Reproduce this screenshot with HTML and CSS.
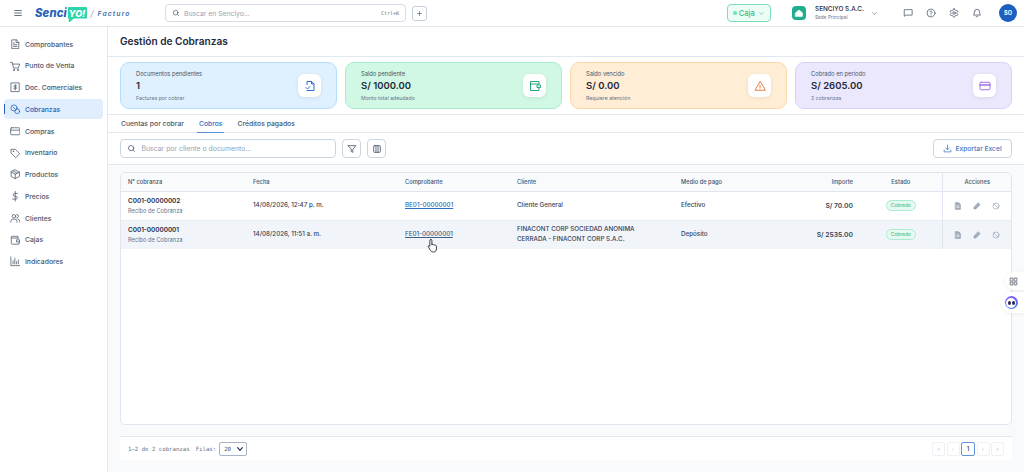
FILE: index.html
```html
<!DOCTYPE html>
<html lang="en">
<head>
    <meta charset="UTF-8">
    <meta name="viewport" content="width=device-width, initial-scale=1.0">
    <title>Gestión de Cobranzas</title>
    <link rel="stylesheet" href="styles.css">
</head>
<body>

    <!-- Top bar -->
    <header class="topbar">
        <div class="topbar-left">
            <svg class="burger" viewBox="0 0 24 24"><path d="M4 6h16M4 12h16M4 18h16"/></svg>
            <div class="logo">
                <span class="logo-senci">Senci</span>
                <span class="logo-yo">YO!</span>
                <span class="logo-slash">/</span>
                <span class="logo-facturo">Facturo</span>
            </div>
        </div>
        <div class="global-search">
            <svg class="ico ico-search" viewBox="0 0 24 24"><circle cx="11" cy="11" r="7"/><path d="m20 20-4-4"/></svg>
            <span class="global-placeholder">Buscar en Senciyo...</span>
            <span class="kbd">Ctrl+K</span>
        </div>
        <button class="plus-btn"><svg viewBox="0 0 24 24"><path d="M12 5v14M5 12h14"/></svg></button>
        <div class="topbar-right">
            <button class="caja-btn"><span class="caja-dot"></span>Caja<svg viewBox="0 0 24 24"><path d="m6 9 6 6 6-6"/></svg></button>
            <div class="company">
                <span class="company-icon"><svg viewBox="0 0 24 24"><path d="M4 11.500 12 5l8 6.500V20H4z"/></svg></span>
                <div class="company-text">
                    <div class="company-name">SENCIYO S.A.C.</div>
                    <div class="company-sede">Sede Principal</div>
                </div>
                <svg class="company-caret" viewBox="0 0 24 24"><path d="m6 9 6 6 6-6"/></svg>
            </div>
            <div class="top-icons">
                <svg viewBox="0 0 24 24"><path d="M21 4H3v16l4-3h14z"/></svg>
                <svg viewBox="0 0 24 24"><circle cx="12" cy="12" r="9.500"/><path d="M9.500 9.500a2.500 2.500 0 1 1 3.800 2.100c-.9.600-1.300 1.100-1.300 2.200M12 17h.01"/></svg>
                <svg viewBox="0 0 24 24"><path d="M12.220 2h-.44a2 2 0 0 0-2 2v.18a2 2 0 0 1-1 1.730l-.43.25a2 2 0 0 1-2 0l-.15-.08a2 2 0 0 0-2.730.73l-.22.38a2 2 0 0 0 .73 2.730l.15.1a2 2 0 0 1 1 1.720v.51a2 2 0 0 1-1 1.740l-.15.09a2 2 0 0 0-.73 2.730l.22.38a2 2 0 0 0 2.730.73l.15-.08a2 2 0 0 1 2 0l.43.25a2 2 0 0 1 1 1.730V20a2 2 0 0 0 2 2h.44a2 2 0 0 0 2-2v-.18a2 2 0 0 1 1-1.730l.43-.25a2 2 0 0 1 2 0l.15.08a2 2 0 0 0 2.730-.73l.22-.39a2 2 0 0 0-.73-2.730l-.15-.08a2 2 0 0 1-1-1.740v-.5a2 2 0 0 1 1-1.740l.15-.09a2 2 0 0 0 .73-2.730l-.22-.38a2 2 0 0 0-2.730-.73l-.15.08a2 2 0 0 1-2 0l-.43-.25a2 2 0 0 1-1-1.730V4a2 2 0 0 0-2-2z"/><circle cx="12" cy="12" r="3"/></svg>
                <svg viewBox="0 0 24 24"><path d="M6 9a6 6 0 0 1 12 0c0 6 2.500 8 2.500 8h-17S6 15 6 9M10 20.500a2.200 2.200 0 0 0 4 0"/></svg>
            </div>
            <div class="avatar">SO</div>
        </div>
    </header>

    <div class="layout">
        <!-- Sidebar -->
        <nav class="sidebar">
            <a class="nav-item"><svg viewBox="0 0 24 24"><path d="M14 2H4v20h16V8zM14 2v6h6M8 13h8M8 17h8M8 9h2"/></svg>Comprobantes</a>
            <a class="nav-item"><svg viewBox="0 0 24 24"><path d="M1 3h4l3 13h11l3-9H6"/><circle cx="9" cy="20.500" r="1.300"/><circle cx="18" cy="20.500" r="1.300"/></svg>Punto de Venta</a>
            <a class="nav-item"><svg viewBox="0 0 24 24"><path d="M3 2h18v20H3zM12 6v12M15 8.500h-4a1.700 1.700 0 0 0 0 3.500h2a1.700 1.700 0 0 1 0 3.500H9"/></svg>Doc. Comerciales</a>
            <a class="nav-item active"><svg viewBox="0 0 24 24"><circle cx="9" cy="9" r="7"/><circle cx="16.500" cy="16.500" r="5.500"/><path d="M6.500 6.500l5 5"/></svg>Cobranzas</a>
            <a class="nav-item"><svg viewBox="0 0 24 24"><rect x="1.500" y="4" width="21" height="16" rx="2"/><path d="M1.500 9.500h21"/></svg>Compras</a>
            <a class="nav-item"><svg viewBox="0 0 24 24"><path d="M3 3h9l10 10-9 9L3 12z"/><circle cx="7.500" cy="7.500" r=".8"/></svg>Inventario</a>
            <a class="nav-item"><svg viewBox="0 0 24 24"><path d="M12 2 21.500 7v10L12 22l-9.500-5V7zM2.500 7l9.500 5 9.500-5M12 12v10M7 4.500l9.500 5"/></svg>Productos</a>
            <a class="nav-item"><svg viewBox="0 0 24 24"><path d="M12 1v22M17 5.500H10a3.300 3.300 0 0 0 0 6.500h4a3.300 3.300 0 0 1 0 6.500H6"/></svg>Precios</a>
            <a class="nav-item"><svg viewBox="0 0 24 24"><circle cx="9" cy="7.500" r="4"/><path d="M2 21v-2a5 5 0 0 1 5-5h4a5 5 0 0 1 5 5v2M15.500 3.500a4 4 0 0 1 0 8M18.500 14a5 5 0 0 1 4 5v2"/></svg>Clientes</a>
            <a class="nav-item"><svg viewBox="0 0 24 24"><path d="M19 7H5a2 2 0 0 1 0-4h13v4M3 5v14a2 2 0 0 0 2 2h15a1 1 0 0 0 1-1v-4M21 11h-6v5h6z"/></svg>Cajas</a>
            <a class="nav-item"><svg viewBox="0 0 24 24"><path d="M2 2v20h20M7 18v-7M11 18V5M15 18v-5M19 18v-9"/></svg>Indicadores</a>
        </nav>

        <main class="content">
            <h1 class="page-title">Gestión de Cobranzas</h1>

            <!-- KPI cards -->
            <section class="kpis">
                <div class="kpi kpi-blue">
                    <div>
                        <div class="kpi-label">Documentos pendientes</div>
                        <div class="kpi-value">1</div>
                        <div class="kpi-sub">Facturas por cobrar</div>
                    </div>
                    <span class="kpi-icon"><svg viewBox="0 0 24 24"><path d="M6 9V3h9l5 5v13H6M15 3v5h5M4 15l3 3 5-5"/></svg></span>
                </div>
                <div class="kpi kpi-green">
                    <div>
                        <div class="kpi-label">Saldo pendiente</div>
                        <div class="kpi-value">S/ 1000.00</div>
                        <div class="kpi-sub">Monto total adeudado</div>
                    </div>
                    <span class="kpi-icon"><svg viewBox="0 0 24 24"><path d="M20 8V3H3v18h17v-5M3 8h17M22 10h-6v5h6z"/></svg></span>
                </div>
                <div class="kpi kpi-orange">
                    <div>
                        <div class="kpi-label">Saldo vencido</div>
                        <div class="kpi-value">S/ 0.00</div>
                        <div class="kpi-sub">Requiere atención</div>
                    </div>
                    <span class="kpi-icon"><svg viewBox="0 0 24 24"><path d="M12 3 2 20.500h20zM12 10v5M12 18h.01"/></svg></span>
                </div>
                <div class="kpi kpi-purple">
                    <div>
                        <div class="kpi-label">Cobrado en período</div>
                        <div class="kpi-value">S/ 2605.00</div>
                        <div class="kpi-sub">2 cobranzas</div>
                    </div>
                    <span class="kpi-icon"><svg viewBox="0 0 24 24"><rect x="2" y="4.500" width="20" height="15" rx="2"/><path d="M2 10h20" stroke-width="3"/></svg></span>
                </div>
            </section>

            <!-- Tabs -->
            <div class="tabs">
                <a class="tab">Cuentas por cobrar</a>
                <a class="tab active">Cobros</a>
                <a class="tab">Créditos pagados</a>
            </div>

            <!-- Toolbar -->
            <div class="toolbar">
                <div class="table-search">
                    <svg viewBox="0 0 24 24"><circle cx="11" cy="11" r="7"/><path d="m20 20-4-4"/></svg>
                    <span>Buscar por cliente o documento...</span>
                </div>
                <button class="tool-btn"><svg viewBox="0 0 24 24"><path d="M3 4h18l-7 8.500V20l-4-2v-5.500z"/></svg></button>
                <button class="tool-btn"><svg viewBox="0 0 24 24"><rect x="4" y="4" width="16" height="16" rx="2"/><path d="M9.500 4v16M14.500 4v16"/></svg></button>
                <button class="export-btn"><svg viewBox="0 0 24 24"><path d="M12 3v12M7 10.500l5 5 5-5M3 16v5h18v-5"/></svg>Exportar Excel</button>
            </div>

            <!-- Table -->
            <section class="table-area">
                <div class="table-card">
                    <table class="cob-table">
                        <colgroup>
                            <col class="col-num"><col class="col-fecha"><col class="col-comp"><col class="col-cliente"><col class="col-medio"><col class="col-importe"><col class="col-estado"><col class="col-acc">
                        </colgroup>
                        <thead>
                            <tr>
                                <th>N° cobranza</th>
                                <th>Fecha</th>
                                <th>Comprobante</th>
                                <th>Cliente</th>
                                <th>Medio de pago</th>
                                <th class="right">Importe</th>
                                <th class="center">Estado</th>
                                <th class="center acc">Acciones</th>
                            </tr>
                        </thead>
                        <tbody>
                            <tr>
                                <td><div class="num">C001-00000002</div><div class="num-sub">Recibo de Cobranza</div></td>
                                <td class="strong">14/08/2026, 12:47 p. m.</td>
                                <td><a class="doc-link">BE01-00000001</a></td>
                                <td class="strong">Cliente General</td>
                                <td class="strong">Efectivo</td>
                                <td class="right amount">S/ 70.00</td>
                                <td class="center"><span class="pill">Cobrado</span></td>
                                <td class="acc">
                                    <div class="acc-icons">
                                        <svg viewBox="0 0 24 24"><path class="solid" d="M5 2h9l5 5v15H5z"/><path d="M9 12h6M9 16h6" class="cut"/></svg>
                                        <svg viewBox="0 0 24 24"><path class="solid" d="M16 3l5 5L8 21H3v-5z"/></svg>
                                        <svg viewBox="0 0 24 24"><circle cx="12" cy="12" r="9"/><path d="m5.500 5.500 13 13"/></svg>
                                    </div>
                                </td>
                            </tr>
                            <tr class="hover">
                                <td><div class="num">C001-00000001</div><div class="num-sub">Recibo de Cobranza</div></td>
                                <td class="strong">14/08/2026, 11:51 a. m.</td>
                                <td><a class="doc-link dark">FE01-00000001</a></td>
                                <td class="strong">FINACONT CORP SOCIEDAD ANONIMA<br>CERRADA - FINACONT CORP S.A.C.</td>
                                <td class="strong">Depósito</td>
                                <td class="right amount">S/ 2535.00</td>
                                <td class="center"><span class="pill">Cobrado</span></td>
                                <td class="acc">
                                    <div class="acc-icons">
                                        <svg viewBox="0 0 24 24"><path class="solid" d="M5 2h9l5 5v15H5z"/><path d="M9 12h6M9 16h6" class="cut"/></svg>
                                        <svg viewBox="0 0 24 24"><path class="solid" d="M16 3l5 5L8 21H3v-5z"/></svg>
                                        <svg viewBox="0 0 24 24"><circle cx="12" cy="12" r="9"/><path d="m5.500 5.500 13 13"/></svg>
                                    </div>
                                </td>
                            </tr>
                        </tbody>
                    </table>
                </div>

                <div class="pager">
                    <span class="pager-info">1–2 de 2 cobranzas</span>
                    <span class="pager-info rows">Filas:</span>
                    <span class="rows-select">20<svg viewBox="0 0 24 24"><path d="m5 8 7 8 7-8"/></svg></span>
                    <div class="pages">
                        <span class="page">«</span>
                        <span class="page">‹</span>
                        <span class="page current">1</span>
                        <span class="page">›</span>
                        <span class="page">»</span>
                    </div>
                </div>
            </section>
        </main>
    </div>

    <!-- Mouse pointer over the second row -->
    <svg class="hand-cursor" viewBox="0 0 14 18"><path d="M4.500 1.500c.8 0 1.200.5 1.200 1.300v5l.3-.9c1 0 1.300.2 1.500.8.900-.4 1.500-.2 1.700.6.900-.3 1.700 0 1.800 1v3.200c0 2-1.200 3.500-3.300 3.500H6.800c-1.300 0-2-.6-2.700-1.700L1.500 9.900c-.5-1 .6-1.700 1.400-1l.4.500V2.800c0-.8.400-1.300 1.200-1.300z"/></svg>

    <!-- Floating widgets on the right edge -->
    <div class="float-btn float-grid">
        <svg viewBox="0 0 24 24"><rect x="3" y="3" width="7.500" height="7.500" rx="1.500"/><rect x="13.500" y="3" width="7.500" height="7.500" rx="1.500"/><rect x="3" y="13.500" width="7.500" height="7.500" rx="1.500"/><rect x="13.500" y="13.500" width="7.500" height="7.500" rx="1.500"/></svg>
    </div>
    <div class="float-btn float-bot"><span class="bot-ring"><span class="bot-face"><i></i><i></i></span></span></div>

</body>
</html>
```

FILE: styles.css
```css
/* Basic styles */
* {
    box-sizing: border-box;
}

body {
    margin: 0;
    width: 1024px;
    height: 472px;
    overflow: hidden;
    background-color: #fff;
    font-family: 'Inter', 'Liberation Sans', sans-serif;
    color: #1f2937;
    position: relative;
}

svg {
    fill: none;
    stroke: currentColor;
    stroke-width: 2;
    stroke-linecap: round;
    stroke-linejoin: round;
    flex: none;
}

button {
    font-family: inherit;
    padding: 0;
    background: #fff;
    cursor: pointer;
}

/* Top bar */
.topbar {
    height: 27px;
    display: flex;
    align-items: center;
    border-bottom: 1px solid #e2e8f0;
    padding-right: 7px;
}

.topbar-left {
    width: 165px;
    display: flex;
    align-items: center;
    padding-left: 13px;
}

.burger {
    width: 10px;
    height: 10px;
    color: #475569;
    margin-right: 12px;
}

.logo {
    display: flex;
    align-items: center;
    height: 20px;
    font-style: italic;
}

.logo-senci {
    font-size: 11.300px;
    font-weight: 800;
    color: #2563b8;
    letter-spacing: .1px;
}

.logo-yo {
    font-size: 9px;
    font-weight: 800;
    color: #fff;
    background-color: #2dd4aa;
    padding: 1px 2px 0 1px;
    line-height: 11px;
    border-radius: 1px 1px 1px 0;
    margin-left: 1px;
    clip-path: polygon(0 0, 100% 0, 100% 80%, 30% 80%, 5% 110%, 5% 80%, 0 80%);
    height: 15px;
    margin-top: 2px;
}

.logo-slash {
    font-size: 9px;
    color: #94a3b8;
    margin: 0 4px 0 3px;
}

.logo-facturo {
    font-size: 6.800px;
    font-weight: 600;
    color: #3f6fa8;
    letter-spacing: 1.100px;
}

.global-search {
    width: 241px;
    height: 18px;
    border: 1px solid #d5dce6;
    border-radius: 4px;
    display: flex;
    align-items: center;
    padding: 0 6px;
    font-size: 6.800px;
    color: #94a3b8;
}

.ico-search {
    width: 8px;
    height: 8px;
    color: #475569;
    margin-right: 4px;
}

.global-placeholder {
    flex: 1;
}

.kbd {
    font-family: 'DejaVu Sans Mono', monospace;
    font-size: 5px;
    color: #64748b;
}

.plus-btn {
    width: 15px;
    height: 15px;
    margin-left: 6px;
    border: 1px solid #c5cede;
    border-radius: 3px;
    color: #475569;
    display: flex;
    align-items: center;
    justify-content: center;
}

.plus-btn svg {
    width: 7px;
    height: 7px;
}

.topbar-right {
    margin-left: auto;
    display: flex;
    align-items: center;
}

.caja-btn {
    width: 44px;
    height: 18px;
    border: 1px solid #7fdcb8;
    border-radius: 4px;
    background-color: #ecfdf5;
    color: #34b98a;
    font-size: 7.500px;
    font-weight: 500;
    display: flex;
    align-items: center;
    justify-content: center;
    gap: 2px;
}

.caja-btn svg {
    width: 7px;
    height: 7px;
    margin-left: 1px;
}

.caja-dot {
    width: 3.500px;
    height: 3.500px;
    border-radius: 50%;
    background-color: #6ee7b7;
}

.company {
    display: flex;
    align-items: center;
    margin-left: 21px;
}

.company-icon {
    width: 14px;
    height: 14px;
    border-radius: 4px;
    background-color: #1fae8e;
    color: #fff;
    display: flex;
    align-items: center;
    justify-content: center;
}

.company-icon svg {
    width: 10px;
    height: 10px;
    fill: #fff;
}

.company-text {
    margin-left: 9px;
    width: 54px;
}

.company-name {
    font-size: 6.400px;
    font-weight: 500;
    color: #1e293b;
    line-height: 9px;
}

.company-sede {
    font-size: 4.800px;
    color: #64748b;
    line-height: 7px;
}

.company-caret {
    width: 7px;
    height: 7px;
    color: #475569;
    margin-left: 2px;
}

.top-icons {
    display: flex;
    align-items: center;
    gap: 13px;
    margin-left: 25px;
    color: #475569;
}

.top-icons svg {
    width: 10px;
    height: 10px;
    stroke-width: 1.800;
}

.avatar {
    width: 18px;
    height: 18px;
    border-radius: 50%;
    margin-left: 17px;
    background-color: #1d5fc0;
    color: #fff;
    font-size: 5.500px;
    font-weight: 700;
    display: flex;
    align-items: center;
    justify-content: center;
}

/* Main layout */
.layout {
    display: flex;
    height: 445px;
}

.sidebar {
    width: 108px;
    flex: none;
    border-right: 1px solid #e2e8f0;
    padding: 7px 4px 0;
    display: flex;
    flex-direction: column;
    gap: 1.750px;
}

.nav-item {
    height: 20px;
    display: flex;
    align-items: center;
    padding-left: 5.500px;
    gap: 5px;
    font-size: 6.800px;
    color: #475569;
    font-weight: 500;
    border-radius: 4px;
    position: relative;
}

.nav-item svg {
    width: 10.500px;
    height: 10.500px;
    stroke-width: 1.700;
    color: #475569;
}

.nav-item.active {
    background-color: #e0edfd;
    color: #2563b8;
}

.nav-item.active svg {
    color: #2563b8;
}

.nav-item.active::before {
    content: '';
    position: absolute;
    left: 0;
    top: 5px;
    bottom: 5px;
    width: 1px;
    background-color: #2563b8;
}

.content {
    flex: 1;
    min-width: 0;
    display: flex;
    flex-direction: column;
}

.page-title {
    margin: 0;
    height: 30px;
    padding: 0 0 2px 12px;
    display: flex;
    align-items: center;
    font-size: 10.100px;
    font-weight: 600;
    color: #1e293b;
    border-bottom: 1px solid #e2e8f0;
}

/* KPI cards */
.kpis {
    height: 58px;
    padding: 5px 12px 5px;
    display: grid;
    grid-template-columns: repeat(4, 1fr);
    gap: 8px;
    border-bottom: 1px solid #e2e8f0;
}

.kpi {
    border: 1px solid;
    border-radius: 9px;
    padding: 0 15px;
    display: flex;
    align-items: center;
    justify-content: space-between;
}

.kpi-blue { background-color: #dff0fe; border-color: #b5e0fc; }
.kpi-green { background-color: #d0f8e4; border-color: #a9eccb; }
.kpi-orange { background-color: #ffedd6; border-color: #fcd9a9; }
.kpi-purple { background-color: #ebe8fe; border-color: #d8d2fb; }

.kpi-label {
    font-size: 5.750px;
    color: #475569;
    line-height: 8px;
}

.kpi-value {
    font-size: 9.500px;
    font-weight: 600;
    color: #1e293b;
    line-height: 16px;
}

.kpi-sub {
    font-size: 5.200px;
    color: #64748b;
    line-height: 8px;
}

.kpi-icon {
    width: 23px;
    height: 23px;
    border-radius: 6px;
    background-color: #fff;
    box-shadow: 0 1px 4px rgba(0, 0, 0, .08);
    display: flex;
    align-items: center;
    justify-content: center;
}

.kpi-icon svg {
    width: 12px;
    height: 12px;
}

.kpi-blue .kpi-icon { color: #2f6fd8; }
.kpi-green .kpi-icon { color: #2aa57c; }
.kpi-orange .kpi-icon { color: #ea7f48; }
.kpi-purple .kpi-icon { color: #a26ef0; }

/* Tabs */
.tabs {
    height: 18px;
    display: flex;
    padding-left: 11px;
    gap: 11px;
    border-bottom: 1px solid #e2e8f0;
}

.tab {
    height: 18px;
    padding: 0 2px;
    font-size: 6.800px;
    font-weight: 500;
    color: #475569;
    display: flex;
    align-items: center;
    border-bottom: 1px solid transparent;
}

.tab.active {
    color: #2f6fc0;
    border-bottom-color: #5b8fd8;
}

/* Toolbar */
.toolbar {
    height: 32px;
    display: flex;
    align-items: center;
    padding: 0 12px;
    gap: 6px;
    border-bottom: 1px solid #e2e8f0;
}

.table-search {
    width: 216px;
    height: 19px;
    border: 1px solid #cbd5e1;
    border-radius: 4px;
    display: flex;
    align-items: center;
    padding-left: 6px;
    gap: 5.500px;
    font-size: 6.900px;
    color: #94a3b8;
}

.table-search svg {
    width: 9px;
    height: 9px;
    color: #475569;
}

.tool-btn {
    width: 19px;
    height: 19px;
    border: 1px solid #cbd5e1;
    border-radius: 4px;
    color: #475569;
    display: flex;
    align-items: center;
    justify-content: center;
}

.tool-btn svg {
    width: 10px;
    height: 10px;
}

.export-btn {
    margin-left: auto;
    width: 79px;
    height: 19px;
    border: 1px solid #cbd5e1;
    border-radius: 4px;
    color: #3f74c4;
    font-size: 6.700px;
    font-weight: 500;
    display: flex;
    align-items: center;
    justify-content: center;
    gap: 3px;
}

.export-btn svg {
    width: 9px;
    height: 9px;
}

/* Table */
.table-area {
    flex: 1;
    min-height: 0;
    background-color: #f8fafc;
    padding: 7px 12px 12px;
    display: flex;
    flex-direction: column;
}

.table-card {
    height: 253px;
    background-color: #fff;
    border: 1px solid #dfe6ef;
    border-radius: 5px;
    overflow: hidden;
}

.cob-table {
    width: 100%;
    border-collapse: collapse;
    table-layout: fixed;
}

.col-num { width: 125px; }
.col-fecha { width: 152px; }
.col-comp { width: 112px; }
.col-cliente { width: 164px; }
.col-medio { width: 117px; }
.col-importe { width: 71px; }
.col-estado { width: 80px; }
.col-acc { width: 70px; }

.cob-table th {
    height: 18px;
    padding: 0 9px 0 7px;
    text-align: left;
    font-size: 5.750px;
    font-weight: 500;
    color: #475569;
    background-color: #f8fafc;
    border-bottom: 1px solid #dfe6ef;
}

.cob-table td {
    height: 29px;
    padding: 0 9px 0 7px;
    font-size: 6.250px;
    color: #334155;
    border-bottom: 1px solid #e8edf3;
    line-height: 9.500px;
}

.cob-table tr:last-child td {
    border-bottom: 0;
}

.cob-table .right { text-align: right; }
.cob-table .center { text-align: center; }

.cob-table .acc {
    border-left: 1px solid #dfe6ef;
    padding: 0;
}

.hover td {
    background-color: #f1f5f9;
}

.num {
    font-size: 6.400px;
    font-weight: 600;
    color: #1e293b;
    line-height: 10px;
}

.num-sub {
    font-size: 5.700px;
    color: #64748b;
    line-height: 9px;
}

.strong {
    font-weight: 500;
}

.doc-link {
    font-size: 6.250px;
    font-weight: 500;
    color: #2f6fc0;
    text-decoration: underline;
    text-underline-offset: 1px;
}

.doc-link.dark {
    color: #3a6088;
}

.cob-table .amount {
    font-weight: 600;
    font-size: 6.750px;
}

.pill {
    display: inline-block;
    height: 11px;
    padding: 0 4px;
    line-height: 9px;
    font-size: 5px;
    color: #34b98a;
    background-color: #e6faf2;
    border: 1px solid #a9ecd0;
    border-radius: 6px;
}

.acc-icons {
    display: flex;
    justify-content: center;
    gap: 11px;
    color: #94a3b8;
}

.acc-icons svg {
    width: 8px;
    height: 8px;
}

.acc-icons .solid {
    fill: #a3aebd;
    stroke: #8b97a8;
}

.acc-icons .cut {
    stroke: #fff;
}

/* Pager */
.pager {
    margin-top: 11px;
    height: 24px;
    background-color: #fff;
    border-top: 1px solid #e2e8f0;
    display: flex;
    align-items: center;
    padding: 0 8px;
}

.pager-info {
    font-family: 'DejaVu Sans Mono', monospace;
    font-size: 5.700px;
    color: #64748b;
}

.rows {
    margin-left: 6px;
}

.rows-select {
    width: 28px;
    height: 14px;
    margin-left: 3px;
    border: 1px solid #a8b4c6;
    border-radius: 2px;
    display: flex;
    align-items: center;
    justify-content: space-between;
    padding: 0 2px 0 4px;
    font-family: 'DejaVu Sans Mono', monospace;
    font-size: 5.700px;
    color: #475569;
}

.rows-select svg {
    width: 8px;
    height: 8px;
    stroke-width: 4;
    color: #334155;
}

.pages {
    margin-left: auto;
    display: flex;
    gap: 1.500px;
}

.page {
    width: 13px;
    height: 14px;
    border: 1px solid #eef2f6;
    border-radius: 2px;
    font-size: 6px;
    color: #d5dce6;
    display: flex;
    align-items: center;
    justify-content: center;
}

.page.current {
    width: 14px;
    border-color: #5f93dc;
    color: #475569;
    font-weight: 600;
}

/* Floating things */
.hand-cursor {
    position: absolute;
    left: 427px;
    top: 238px;
    width: 12px;
    height: 16px;
    fill: #fff;
    stroke: #222;
    stroke-width: 1;
}

.float-btn {
    position: absolute;
    background-color: #fff;
    border-radius: 50% 0 0 50%;
    display: flex;
    align-items: center;
    justify-content: center;
    box-shadow: 0 1px 4px rgba(0, 0, 0, .06);
}

.float-grid {
    left: 1005px;
    top: 272px;
    width: 19px;
    height: 18px;
    color: #8b8f98;
    padding-right: 2px;
}

.float-grid svg {
    width: 9px;
    height: 9px;
    stroke-width: 3;
}

.float-bot {
    left: 1001px;
    top: 292px;
    width: 23px;
    height: 21px;
    padding-right: 3px;
}

.bot-ring {
    width: 13px;
    height: 13px;
    border-radius: 50%;
    background: conic-gradient(#8b5cf6, #3b82f6, #8b5cf6);
    display: flex;
    align-items: center;
    justify-content: center;
}

.bot-face {
    width: 10px;
    height: 10px;
    border-radius: 50%;
    background-color: #fff;
    display: flex;
    align-items: center;
    justify-content: center;
    gap: 1px;
}

.bot-face i {
    width: 3px;
    height: 4px;
    border-radius: 50%;
    background-color: #27244f;
}
```
